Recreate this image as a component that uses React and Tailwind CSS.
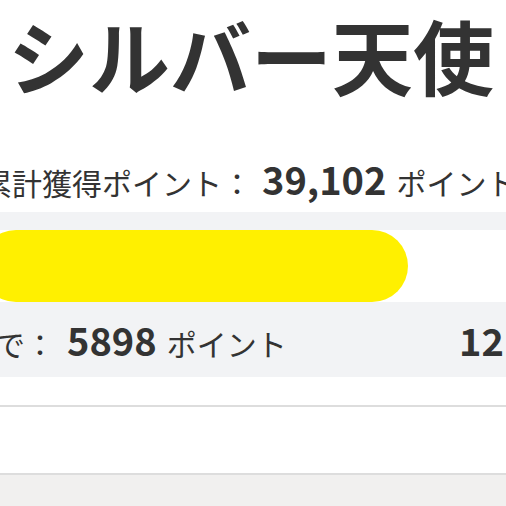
import React from "react";

const App = () => {
  const pct = 100;

  return (
    <div className="h-[506px] w-[506px] overflow-hidden bg-white font-['Noto_Sans_CJK_JP',sans-serif] text-[#333]">
      {/* ── Rank title ── */}
      <h1 className="whitespace-nowrap pl-[8px] pt-[13px] text-[81px] font-bold leading-none">
        シルバー天使
      </h1>

      {/* ── Total points ── */}
      <p className="ml-[-18px] mt-[65px] whitespace-nowrap text-[30px] leading-[40px]">
        累計獲得ポイント：
        <span className="ml-[10px] text-[38px] font-bold">39,102</span>
        <span className="ml-[10px]">ポイント</span>
      </p>

      {/* ── Progress card ── */}
      <div className="ml-[-20px] mt-[10px] w-[560px] bg-[#f2f3f5] pt-[18px]">
        <div className="h-[72px] w-full bg-white">
          <div className="h-full rounded-full bg-[#fff000]" style={{ width: `${(428 / 560) * pct}%` }} />
        </div>
        <div className="flex h-[75px] items-center whitespace-nowrap">
          <div className="ml-[-165px] w-[644px] shrink-0 text-[30px]">
            次のランクまで：
            <span className="ml-[12px] text-[38px] font-bold">5898</span>
            <span className="ml-[10px]">ポイント</span>
          </div>
          <div className="shrink-0 text-[38px] font-bold">1219</div>
        </div>
      </div>

      {/* ── Empty rows ── */}
      <div className="mt-[28px] h-[70px] border-y-2 border-[#dddddd]" />
      <div className="h-[40px] bg-[#f1f0ef]" />
    </div>
  );
};

export default App;
